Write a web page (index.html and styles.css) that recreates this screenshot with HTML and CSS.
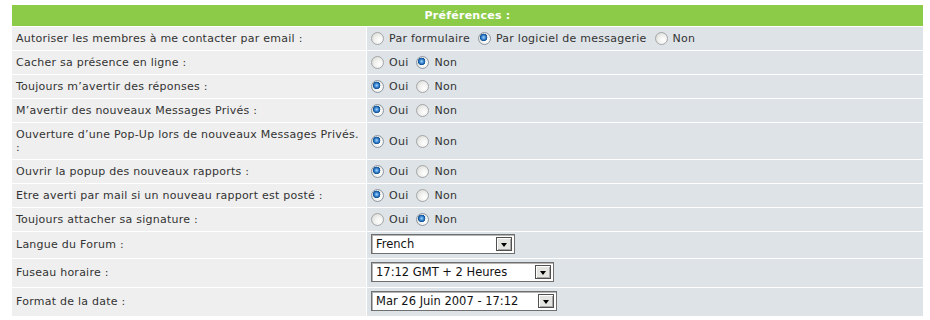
FILE: index.html
```html
<!DOCTYPE html>
<html lang="fr">
<head>
<meta charset="utf-8">
<title>Préférences</title>
<link rel="stylesheet" href="styles.css">
</head>
<body>
<table class="forumline">
  <colgroup><col class="c-label"><col class="c-field"></colgroup>
  <tr><th colspan="2" class="cat">Préférences :</th></tr>
  <tr>
    <td class="row1">Autoriser les membres à me contacter par email :</td>
    <td class="row2"><div class="opts">
      <label class="opt"><input type="radio" name="c1"> Par formulaire</label>
      <label class="opt"><input type="radio" name="c1" checked> Par logiciel de messagerie</label>
      <label class="opt"><input type="radio" name="c1"> Non</label>
    </div></td>
  </tr>
  <tr>
    <td class="row1">Cacher sa présence en ligne :</td>
    <td class="row2"><div class="opts"><label class="opt"><input type="radio" name="c2"> Oui</label><label class="opt"><input type="radio" name="c2" checked> Non</label></div></td>
  </tr>
  <tr>
    <td class="row1">Toujours m’avertir des réponses :</td>
    <td class="row2"><div class="opts"><label class="opt"><input type="radio" name="c3" checked> Oui</label><label class="opt"><input type="radio" name="c3"> Non</label></div></td>
  </tr>
  <tr>
    <td class="row1">M’avertir des nouveaux Messages Privés :</td>
    <td class="row2"><div class="opts"><label class="opt"><input type="radio" name="c4" checked> Oui</label><label class="opt"><input type="radio" name="c4"> Non</label></div></td>
  </tr>
  <tr>
    <td class="row1">Ouverture d’une Pop-Up lors de nouveaux Messages Privés.<br>:</td>
    <td class="row2"><div class="opts"><label class="opt"><input type="radio" name="c5" checked> Oui</label><label class="opt"><input type="radio" name="c5"> Non</label></div></td>
  </tr>
  <tr>
    <td class="row1">Ouvrir la popup des nouveaux rapports :</td>
    <td class="row2"><div class="opts"><label class="opt"><input type="radio" name="c6" checked> Oui</label><label class="opt"><input type="radio" name="c6"> Non</label></div></td>
  </tr>
  <tr>
    <td class="row1">Etre averti par mail si un nouveau rapport est posté :</td>
    <td class="row2"><div class="opts"><label class="opt"><input type="radio" name="c7" checked> Oui</label><label class="opt"><input type="radio" name="c7"> Non</label></div></td>
  </tr>
  <tr>
    <td class="row1">Toujours attacher sa signature :</td>
    <td class="row2"><div class="opts"><label class="opt"><input type="radio" name="c8"> Oui</label><label class="opt"><input type="radio" name="c8" checked> Non</label></div></td>
  </tr>
  <tr class="selrow first">
    <td class="row1">Langue du Forum :</td>
    <td class="row2"><div class="select w1"><span class="val">French</span><span class="btn"></span></div></td>
  </tr>
  <tr class="selrow">
    <td class="row1">Fuseau horaire :</td>
    <td class="row2"><div class="select w2"><span class="val">17:12 GMT + 2 Heures</span><span class="btn"></span></div></td>
  </tr>
  <tr class="selrow">
    <td class="row1">Format de la date :</td>
    <td class="row2"><div class="select w3"><span class="val">Mar 26 Juin 2007 - 17:12</span><span class="btn"></span></div></td>
  </tr>
</table>
</body>
</html>
```
FILE: styles.css
```css
body {
  margin: 0;
  padding: 4px 6px 0 11px;
  background: #ffffff;
  font-family: "DejaVu Sans", Verdana, sans-serif;
  font-size: 11px;
  letter-spacing: 0.25px;
  color: #333333;
}
.forumline {
  width: 913px;
  table-layout: fixed;
  border-collapse: separate;
  border-spacing: 1px;
  background: #ffffff;
}
.c-label { width: 354px; }
.cat {
  background: #8bcb47;
  color: #ffffff;
  font-weight: bold;
  font-size: 11px;
  height: 21px;
  padding: 0;
  text-align: center;
}
td {
  padding: 5px 4px;
  line-height: 13px;
  vertical-align: middle;
}
.row1 { background: #efefef; }
.row2 { background: #dee3e7; }
.opts {
  display: flex;
  align-items: center;
  height: 13px;
}
.opt {
  display: flex;
  align-items: center;
  margin-right: 8px;
}
.opt input {
  appearance: none;
  -webkit-appearance: none;
  width: 13px;
  height: 13px;
  margin: 0 5px 0 0;
  border-radius: 50%;
  border: 1px solid #a4a6a8;
  background: radial-gradient(circle at 65% 65%, #ffffff 0%, #f0f0ee 45%, #d2d2cc 100%);
  box-sizing: border-box;
}
.opt input:checked {
  border-color: #8d98a4;
  background:
    radial-gradient(circle at 42% 40%, #a8d4ff 0px, #3a86d0 2px, #0d4f93 3.5px, rgba(13,79,147,0) 4px),
    radial-gradient(circle at 65% 65%, #ffffff 0%, #f0f0ee 45%, #d2d2cc 100%);
}
.selrow td { padding-top: 3px; padding-bottom: 5px; }
.selrow.first td { padding-top: 2px; padding-bottom: 4px; }
.select {
  display: flex;
  align-items: center;
  height: 20px;
  box-sizing: border-box;
  border: 1px solid #6f6f6f;
  box-shadow: inset 1px 1px 0 #b5b5b5;
  background: #ffffff;
  color: #111111;
  font-size: 11.5px;
  letter-spacing: 0;
  padding: 0 2px 0 4px;
}
.w1 { width: 144px; }
.w2 { width: 183px; }
.w3 { width: 186px; }
.val { flex: 1; }
.btn {
  width: 16px;
  height: 14px;
  box-sizing: border-box;
  border: 1px solid #505050;
  box-shadow: inset 1px 1px 0 #ffffff, inset -1px -1px 0 #a8a8a8;
  background: #e4e4e0;
  display: flex;
  align-items: center;
  justify-content: center;
}
.btn::after {
  content: "";
  width: 0;
  height: 0;
  margin-top: 2px;
  border-left: 3.5px solid transparent;
  border-right: 3.5px solid transparent;
  border-top: 4px solid #000000;
}
```
